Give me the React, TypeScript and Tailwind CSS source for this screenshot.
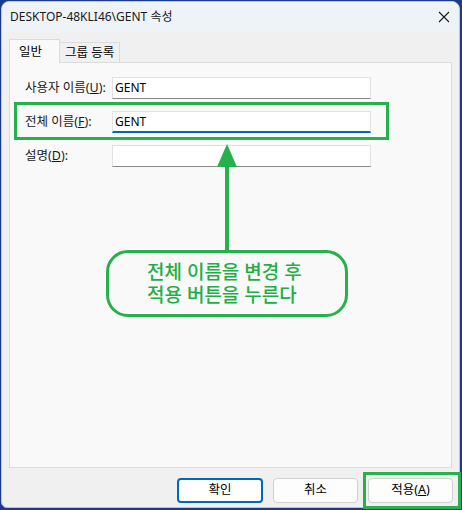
import React from "react";

const font = { fontFamily: '"Noto Sans", "Noto Sans CJK KR", sans-serif' };

function Field({ label, hotkey, value, active }: { label: string; hotkey: string; value?: string; active?: boolean }) {
  return (
    <div className="flex items-center h-[22px]">
      <div className="w-[87px] text-[12.5px] text-[#1a1a1a]">
        {label}(<span className="underline">{hotkey}</span>):
      </div>
      <div
        className={`w-[259px] h-[22px] bg-white border border-[#e2e2e2] flex items-center px-[2px] text-[12px] text-black ${
          active ? "border-b-2 border-b-[#0067c0]" : "border-b-[#868686]"
        }`}
      >
        {value}
      </div>
    </div>
  );
}

export default function App() {
  return (
    <div className="w-[462px] h-[510px] bg-[#1c3b8c] relative overflow-hidden" style={font}>
      {/* Window */}
      <div className="absolute left-[1px] top-[1px] w-[459px] h-[507px] bg-[#f0f0f0] rounded-t-[8px] rounded-b-[6px] border border-[#bfc5cc] flex flex-col overflow-hidden">
        {/* Title bar */}
        <div className="h-[30px] bg-[#eef3f8] flex items-center justify-between pl-[8px] pr-[6px] shrink-0">
          <span className="text-[12px] text-[#1a1a1a]">DESKTOP-48KLI46\GENT 속성</span>
          <svg width="12" height="12" viewBox="0 0 12 12" className="mr-[3px]">
            <path d="M1 1 L11 11 M11 1 L1 11" stroke="#1a1a1a" strokeWidth="1.1" />
          </svg>
        </div>

        {/* Body */}
        <div className="px-[7px] pt-[7px] flex flex-col">
          {/* Tabs */}
          <div className="flex items-end h-[23px]">
            <div className="h-[24px] w-[51px] bg-[#f9f9f9] border border-[#dcdcdc] border-b-0 text-[12.5px] text-black pl-[9px] pt-[3px] relative z-10 -mb-px">
              일반
            </div>
            <div className="h-[20px] w-[60px] bg-[#f0f0f0] border border-[#dcdcdc] border-b-0 border-l-0 text-[12.5px] text-black pl-[5px] pt-[1px]">
              그룹 등록
            </div>
          </div>
          {/* Panel */}
          <div className="h-[406px] bg-[#f9f9f9] border border-[#dcdcdc] pt-[14px] pl-[15px] flex flex-col gap-[12px]">
            <Field label="사용자 이름" hotkey="U" value="GENT" />
            <Field label="전체 이름" hotkey="F" value="GENT" active />
            <Field label="설명" hotkey="D" />
          </div>
        </div>

        {/* Buttons */}
        <div className="flex justify-end gap-[10px] pr-[6px] pt-[10px]">
          <button className="w-[86px] h-[25px] rounded-[4px] bg-white border-2 border-[#0067c0] text-[12.5px] text-black">
            확인
          </button>
          <button className="w-[85px] h-[25px] rounded-[4px] bg-[#fdfdfd] border border-[#d0d0d0] text-[12.5px] text-black">
            취소
          </button>
          <button className="w-[85px] h-[25px] rounded-[4px] bg-[#fdfdfd] border border-[#d0d0d0] text-[12.5px] text-black">
            적용(<span className="underline">A</span>)
          </button>
        </div>
      </div>

      {/* Annotations */}
      <div className="absolute left-[14px] top-[102px] w-[375px] h-[38px] border-[3px] border-[#26b14c]" />
      <svg className="absolute left-[215px] top-[144px]" width="24" height="108" viewBox="0 0 24 108">
        <polygon points="12,0 2,23 22,23" fill="#26b14c" />
        <rect x="10" y="20" width="4" height="88" fill="#26b14c" />
      </svg>
      <div className="absolute left-[106px] top-[250px] w-[242px] h-[67px] border-[3px] border-[#26b14c] rounded-[22px] flex items-center pl-[38px]">
        <p className="text-[19px] leading-[23px] font-medium text-[#1fae45]">
          전체 이름을 변경 후
          <br />
          적용 버튼을 누른다
        </p>
      </div>
      <div className="absolute left-[363px] top-[472px] w-[98px] h-[37px] border-[3px] border-[#26b14c]" />
    </div>
  );
}
